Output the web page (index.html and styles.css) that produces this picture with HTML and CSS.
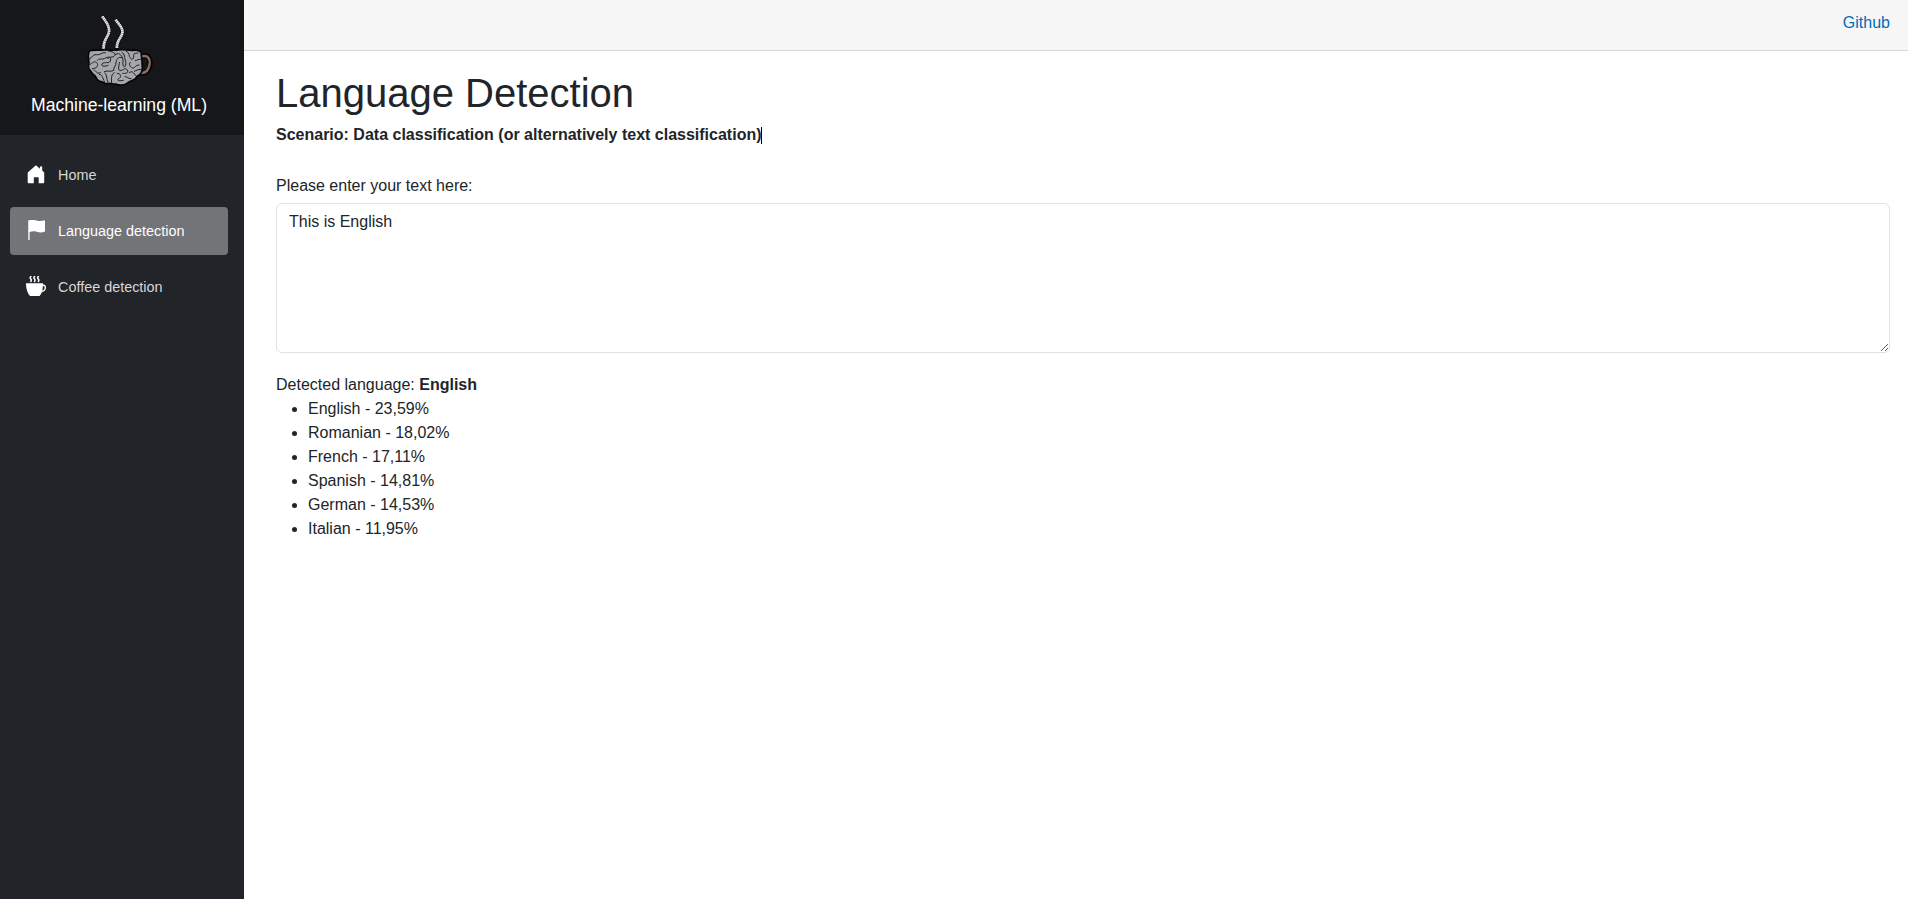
FILE: index.html
```html
<!DOCTYPE html>
<html lang="en">
<head>
<meta charset="utf-8">
<title>Language Detection</title>
<link rel="stylesheet" href="styles.css">
</head>
<body>
<div class="page">
  <aside class="sidebar">
    <div class="brand">
      <svg class="logo" viewBox="0 0 240 240" fill="none" stroke-linecap="round" stroke-linejoin="round">
        <g stroke="#0b0b0d" stroke-width="13">
          <path d="M70 22C78 35 90 48 87 66C84 82 70 88 72 112"/>
          <path d="M111 32C117 44 130 54 127 69C124 84 109 92 112 112"/>
        </g>
        <g stroke="#77787b" stroke-width="8" stroke-linecap="butt">
          <path d="M67 19C77 35 90 48 87 66C84 82 70 88 71 116"/>
          <path d="M107 29C117 44 130 54 127 69C124 84 109 92 111 114"/>
        </g>
        <g stroke="#eeeee9" stroke-width="8" stroke-linecap="butt" stroke-dasharray="4 2">
          <path d="M67 19C77 35 90 48 87 66C84 82 70 88 71 116"/>
          <path d="M107 29C117 44 130 54 127 69C124 84 109 92 111 114"/>
        </g>
        <path stroke="#050506" stroke-width="15" d="M184 140C204 132 212 146 210 164C208 182 197 193 179 190"/>
        <path stroke="#8f6c60" stroke-width="7" d="M186 139C204 134 211 148 209 162C206 181 195 191 179 189"/>
        <path fill="#a5a6aa" stroke="#050506" stroke-width="5" d="M27 124C36 118 55 122 72 120C85 118 100 123 115 120C130 117 145 122 158 121C170 119 182 122 184 130C182 140 188 148 186 158C186 168 190 178 184 188C180 196 171 195 168 204C163 212 149 212 142 219C135 226 118 227 107 222C98 224 92 218 84 221C74 222 68 214 58 213C48 210 50 200 43 196C35 190 32 182 27 176C23 168 29 160 26 150C24 140 25 132 27 124Z"/>
        <g stroke="#1f2022" stroke-width="3">
          <path d="M28 148C38 142 36 133 49 134C61 137 63 126 76 128"/>
          <path d="M52 151C56 143 66 151 77 144C90 137 94 145 91 153C86 163 75 153 66 162C62 169 74 171 84 166"/>
          <path d="M80 121C91 126 104 124 105 134C104 144 91 138 83 145"/>
          <path d="M28 164C39 160 41 151 50 158C58 165 49 177 37 176M42 180C51 182 47 194 61 188"/>
          <path d="M105 134C116 126 124 134 127 143C132 151 126 159 130 168C134 174 139 168 137 155C133 143 135 132 126 127"/>
          <path d="M139 124C150 127 145 138 152 145C156 151 163 146 161 136C161 128 168 130 174 129"/>
          <path d="M127 143C113 139 109 148 108 159C109 166 100 172 101 181C91 187 85 180 73 185"/>
          <path d="M118 157C119 168 111 176 120 182C131 181 135 171 142 180C147 188 137 192 128 190"/>
          <path d="M151 157C145 163 150 170 157 174C166 175 165 165 177 165M166 152C171 152 175 146 183 148"/>
          <path d="M103 188C95 191 93 202 95 218M75 189C82 196 78 204 84 217M58 193C67 193 68 204 73 215"/>
          <path d="M112 190C120 190 126 198 118 205C108 211 114 214 130 211"/>
          <path d="M135 200C143 199 143 207 153 206M148 188C158 180 160 190 168 197M163 184C169 182 172 178 183 178"/>
        </g>
      </svg>
      <div class="brand-name">Machine-learning (ML)</div>
    </div>
    <nav class="nav">
      <a class="nav-link">
        <svg class="icon" viewBox="0 0 20 20" fill="#fff"><path d="M9.9 1.3l4 3.4V2.6h2.3v4l2 1.8v10q0 .8-.8.8h-4.7v-5.4q0-.6-.6-.6H8.4q-.6 0-.6.6v5.4H2.5q-.8 0-.8-.8V8.4z"/></svg>
        <span>Home</span>
      </a>
      <a class="nav-link active">
        <svg class="icon" viewBox="0 0 20 20" fill="#fff"><path fill="#e2e2e2" d="M2.1.3h1.7V20H2.1z"/><path d="M2.8.5c3-.9 5.3-.7 7.7 0 2.6.8 5 .7 8.5-.2v11.2c-3 1.2-5.7 1.1-8.4.2-2.2-.6-4.4-.5-7.8.5z"/></svg>
        <span>Language detection</span>
      </a>
      <a class="nav-link">
        <svg class="icon" viewBox="0 0 20 20" fill="#fff"><path d="M0 7.3h17v1.4c1.7-.4 3 .8 3 2.9 0 2.6-1.7 4.3-4.2 4.6-.6 1.5-1.3 2.8-2.2 3.8H4.1C1.6 17.5 0 12.8 0 7.3zm16.9 2.8c-.1 1.6-.2 3.1-.6 4.5 1.4-.3 2.3-1.4 2.3-2.9 0-1.3-.7-2-1.7-1.6z"/><path fill="none" stroke="#fff" stroke-width="1.5" d="M5.4.1C3.7 1.3 4 2.2 4.8 3.1S5.5 5 4.5 6.1M9.1.1C7.4 1.3 7.7 2.2 8.5 3.1S9.2 5 8.2 6.1M12.9.1c-1.7 1.2-1.4 2.1-.6 3S13 5 12 6.1"/></svg>
        <span>Coffee detection</span>
      </a>
    </nav>
  </aside>
  <main class="main">
    <header class="top-row"><a class="link">Github</a></header>
    <article class="content">
      <h1 class="title">Language Detection</h1>
      <p class="scenario"><strong>Scenario: Data classification (or alternatively text classification)</strong><span class="caret"></span></p>
      <label class="label" for="text">Please enter your text here:</label>
      <textarea class="input" id="text" spellcheck="false">This is English</textarea>
      <div class="result">Detected language: <strong>English</strong></div>
      <ul class="scores">
        <li>English - 23,59%</li>
        <li>Romanian - 18,02%</li>
        <li>French - 17,11%</li>
        <li>Spanish - 14,81%</li>
        <li>German - 14,53%</li>
        <li>Italian - 11,95%</li>
      </ul>
    </article>
  </main>
</div>
</body>
</html>
```
FILE: styles.css
```css
* { box-sizing: border-box; }
body {
  margin: 0;
  font: 16px/24px "Liberation Sans", Arial, sans-serif;
  color: #212529;
  background: #fff;
}
.page { display: flex; min-height: 100vh; }
.sidebar { width: 244px; flex: none; background: #212429; }
.brand {
  height: 135px;
  padding-top: 10px;
  padding-right: 4px;
  display: flex;
  flex-direction: column;
  align-items: center;
  background: #16171b;
}
.logo { width: 80px; height: 80px; flex: none; }
.brand-name { margin: 3px 0 0 -2px; font-size: 17.6px; color: #fff; white-space: nowrap; }
.nav { display: flex; flex-direction: column; gap: 8px; padding: 16px 16px 0 10px; }
.nav-link {
  display: flex;
  align-items: center;
  height: 48px;
  padding-left: 16px;
  gap: 12px;
  border-radius: 4px;
  font-size: 14.4px;
  color: #d7d7d7;
}
.nav-link.active { background: #737478; color: #fff; }
.icon { width: 20px; height: 20px; flex: none; margin-bottom: 2px; }
.main { flex: 1; min-width: 0; }
.top-row {
  height: 51px;
  padding: 11px 18px 0 0;
  text-align: right;
  background: #f7f7f7;
  border-bottom: 1px solid #d6d5d5;
}
.link { color: #006bb7; }
.content { padding: 18px 18px 0 32px; }
.title { margin: 0 0 6px; font-size: 40px; line-height: 48px; font-weight: 400; }
.scenario { display: flex; align-items: center; margin: 0 0 27px; }
.caret { width: 1px; height: 17px; margin-left: -1px; background: #000; }
.label { display: block; margin-bottom: 5px; }
.input {
  display: block;
  width: 100%;
  height: 150px;
  padding: 6px 12px;
  border: 1px solid #dee2e6;
  border-radius: 6px;
  font: inherit;
  color: inherit;
  outline: none;
  resize: vertical;
}
.result { margin-top: 20px; }
.scores { margin: 0; padding-left: 32px; }
```
